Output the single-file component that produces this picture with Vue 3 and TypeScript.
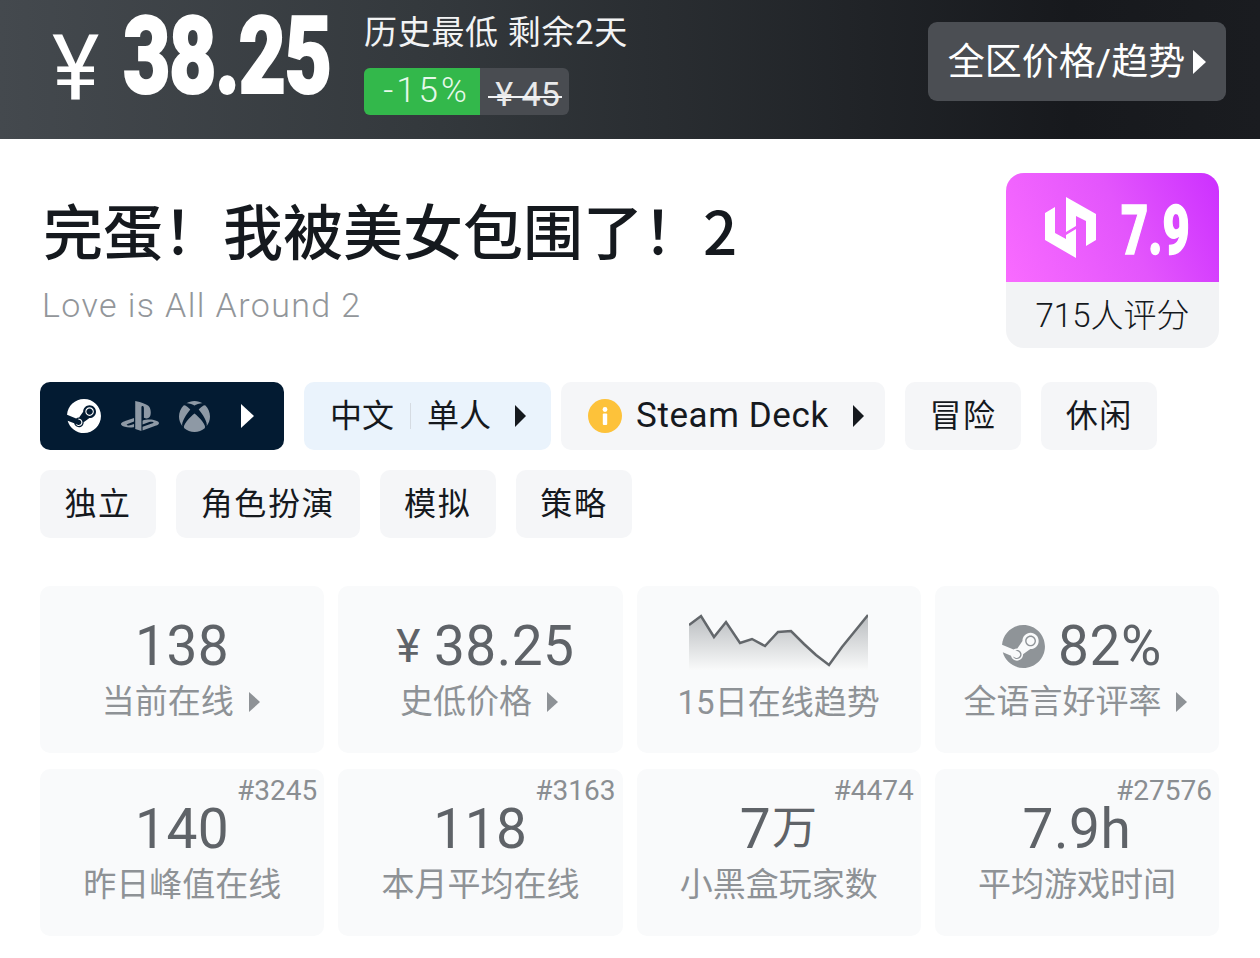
<script setup lang="ts">
interface Stat { value: string; unit?: string; label: string; arrow?: boolean; rank?: string; yen?: boolean; steam?: boolean; chart?: boolean }

const tagsA: string[] = ['冒险', '休闲']
const tagsB: string[] = ['独立', '角色扮演', '模拟', '策略']

const stats: Stat[] = [
  { value: '138', label: '当前在线', arrow: true },
  { value: '38.25', label: '史低价格', arrow: true, yen: true },
  { value: '', label: '15日在线趋势', chart: true },
  { value: '82%', label: '全语言好评率', arrow: true, steam: true },
  { value: '140', label: '昨日峰值在线', rank: '#3245' },
  { value: '118', label: '本月平均在线', rank: '#3163' },
  { value: '7', unit: '万', label: '小黑盒玩家数', rank: '#4474' },
  { value: '7.9h', label: '平均游戏时间', rank: '#27576' },
]

const chartPoints = '0,11 12,2 25,23 37,8 51,29 63,25 76,32 89,18 102,17 115,30 127,41 140,51 153,33 166,17 179,1'
const chartArea = `0,56 ${chartPoints} 179,56`
const gameTitle = '完蛋\uFF01我被美女包围了\uFF012'
const steamPath = 'M11.979 0C5.678 0 .511 4.86.022 11.037l6.432 2.658c.545-.371 1.203-.59 1.912-.59.063 0 .125.004.188.006l2.861-4.142V8.91c0-2.495 2.028-4.524 4.524-4.524 2.494 0 4.524 2.031 4.524 4.527s-2.03 4.525-4.524 4.525h-.105l-4.076 2.911c0 .052.004.105.004.159 0 1.875-1.515 3.396-3.39 3.396-1.635 0-3.016-1.173-3.331-2.727L.436 15.27C1.862 20.307 6.486 24 11.979 24c6.627 0 11.999-5.373 11.999-12S18.605 0 11.979 0zM7.54 18.21l-1.473-.61c.262.543.714.999 1.314 1.25 1.297.539 2.793-.076 3.332-1.375.263-.63.264-1.319.005-1.949s-.75-1.121-1.377-1.383c-.624-.26-1.29-.249-1.878-.03l1.523.63c.956.4 1.409 1.5 1.009 2.455-.397.957-1.497 1.41-2.454 1.012H7.54zm11.415-9.303c0-1.662-1.353-3.015-3.015-3.015-1.665 0-3.015 1.353-3.015 3.015 0 1.665 1.35 3.015 3.015 3.015 1.663 0 3.015-1.35 3.015-3.015zm-5.273-.005c0-1.252 1.013-2.266 2.265-2.266 1.249 0 2.266 1.014 2.266 2.266 0 1.251-1.017 2.265-2.266 2.265-1.253 0-2.265-1.014-2.265-2.265z'
</script>

<template>
  <div class="page">
    <header class="price-bar">
      <div class="price-main">
        <span class="yen">¥</span>
        <span class="big">38.25</span>
      </div>
      <div class="price-info">
        <div class="low-note">历史最低 剩余2天</div>
        <div class="discount">
          <span class="off">-15%</span>
          <span class="orig">¥ 45</span>
        </div>
      </div>
      <button class="region-btn"><span class="region-text">全区价格/趋势</span><i class="tri tri-white tri-big"></i></button>
    </header>

    <section class="title-row">
      <div class="titles">
        <h1>{{ gameTitle }}</h1>
        <p>Love is All Around 2</p>
      </div>
      <div class="score">
        <div class="score-top">
          <svg class="hh-logo" viewBox="0 0 51 61" aria-hidden="true">
            <path d="M21 0 L51 17 V43 L41 49 V24 L31 19 V29 L21 35 Z" fill="#fff" />
            <path d="M0 16 L10 10 V36 L21 42 V38 L31 32 V61 L0 43 Z" fill="#fff" />
          </svg>
          <span class="score-num">7.9</span>
        </div>
        <div class="score-bottom">715人评分</div>
      </div>
    </section>

    <section class="tags">
      <div class="tag-row">
        <div class="tag tag-dark">
          <svg class="pf" viewBox="0 0 24 24"><path :d="steamPath" fill="#fff" /></svg>
          <svg class="pf pf-ps" viewBox="0 0 24 24"><path fill="#8e99a5" d="M8.985 2.596v17.548l3.915 1.261V6.688c0-.69.304-1.151.794-.991.636.181.76.814.76 1.505v5.876c2.441 1.193 4.362-.002 4.362-3.153 0-3.237-1.126-4.675-4.438-5.827-1.307-.448-3.728-1.186-5.391-1.502zm4.656 16.242l6.296-2.275c.715-.258.826-.625.246-.818-.586-.192-1.637-.139-2.357.123l-4.205 1.499v-2.385l.24-.085s1.201-.42 2.913-.615c1.696-.18 3.785.03 5.437.661 1.848.601 2.041 1.472 1.576 2.072s-1.622 1.036-1.622 1.036l-8.544 3.107v-2.297zM1.808 18.6c-1.9-.545-2.214-1.668-1.352-2.321.801-.585 2.159-1.051 2.159-1.051l5.616-2.013v2.313L4.206 17c-.705.271-.825.63-.239.825.586.195 1.637.15 2.343-.12L8.248 17v2.074c-.121.029-.256.044-.391.073-1.938.331-3.995.196-6.049-.547z" /></svg>
          <svg class="pf pf-x" viewBox="0 0 24 24"><path fill="#8e99a5" d="M4.102 21.033C6.211 22.881 8.977 24 12 24c3.026 0 5.789-1.119 7.902-2.967 1.877-1.912-4.316-8.709-7.902-11.417-3.582 2.708-9.779 9.505-7.898 11.417zm11.16-14.406c2.5 2.961 7.484 10.313 6.076 12.912C23.002 17.48 24 14.861 24 12.004c0-3.34-1.365-6.362-3.57-8.536 0 0-.027-.022-.082-.042-.063-.022-.152-.045-.281-.045-.592 0-1.985.434-4.805 3.246zM3.654 3.426c-.057.02-.082.041-.086.042C1.365 5.642 0 8.664 0 12.004c0 2.854.998 5.473 2.661 7.533-1.401-2.605 3.579-9.951 6.08-12.91-2.82-2.813-4.216-3.245-4.806-3.245-.131 0-.223.021-.281.046v-.002zM12 3.551S9.055 1.828 6.755 1.746c-.903-.033-1.454.295-1.521.339C7.379.646 9.659 0 11.984 0H12c2.334 0 4.605.646 6.766 2.085-.068-.046-.615-.372-1.52-.339C14.946 1.828 12 3.545 12 3.545v.006z" /></svg>
          <i class="tri tri-white tri-tag"></i>
        </div>
        <div class="tag tag-blue">
          <span>中文</span><span class="sep"></span><span>单人</span><i class="tri tri-dark tri-tag-s"></i>
        </div>
        <div class="tag tag-deck">
          <svg class="info" viewBox="0 0 34 34">
            <circle cx="17" cy="17" r="17" fill="#fdc23a" />
            <circle cx="17" cy="10.5" r="2.4" fill="#fff" />
            <rect x="14.8" y="14.5" width="4.4" height="11.5" rx="1" fill="#fff" />
          </svg>
          <span class="deck-text">Steam Deck</span><i class="tri tri-dark tri-tag-s"></i>
        </div>
        <div v-for="t in tagsA" :key="t" class="tag tag-plain">{{ t }}</div>
      </div>
      <div class="tag-row">
        <div v-for="t in tagsB" :key="t" class="tag tag-plain">{{ t }}</div>
      </div>
    </section>

    <section class="stats">
      <div v-for="s in stats" :key="s.label" class="stat">
        <span v-if="s.rank" class="rank">{{ s.rank }}</span>
        <svg v-if="s.chart" class="chart" viewBox="0 -2 179 58">
          <defs>
            <linearGradient id="areaFill" x1="0" y1="0" x2="0" y2="1">
              <stop offset="0" stop-color="#b9bcbf" />
              <stop offset="1" stop-color="#f9fafa" />
            </linearGradient>
          </defs>
          <polygon :points="chartArea" fill="url(#areaFill)" />
          <polyline :points="chartPoints" fill="none" stroke="#63676b" stroke-width="2.5" />
        </svg>
        <div v-else class="value" :class="{ 'value-shift': s.yen || s.steam }">
          <svg v-if="s.steam" class="steam-sm" viewBox="0 0 24 24"><path :d="steamPath" fill="#8f9498" /></svg>
          <span v-if="s.yen" class="value-yen">¥</span>{{ s.value }}<span v-if="s.unit" class="value-unit">{{ s.unit }}</span>
        </div>
        <div class="label">{{ s.label }}<i v-if="s.arrow" class="tri tri-grey"></i></div>
      </div>
    </section>
  </div>
</template>

<style scoped>
.page {
  width: 1260px;
  height: 958px;
  background: #fff;
  overflow: hidden;
  font-family: Roboto, "Noto Sans CJK SC", sans-serif;
  color: #15191e;
}
.price-bar {
  height: 139px;
  box-sizing: border-box;
  display: flex;
  align-items: flex-start;
  padding: 0 34px 0 52px;
  background: linear-gradient(90deg, #44494e 0%, #33383c 35%, #17191d 85%, #1a1c20 100%);
  color: #fff;
}
.price-main {
  display: flex;
  align-items: flex-start;
  width: 312px;
  flex: none;
}
.yen {
  font-size: 90px;
  line-height: 90px;
  margin-top: 24px;
  width: 71px;
  font-family: Roboto, sans-serif;
  font-weight: 400;
  flex: none;
}
.big {
  display: block;
  margin-top: 1px;
  font-family: Roboto, sans-serif;
  font-weight: 900;
  font-size: 108px;
  line-height: 110px;
  letter-spacing: -2px;
  -webkit-text-stroke: 2px #fff;
  white-space: nowrap;
  transform: scaleX(0.76);
  transform-origin: left top;
}
.price-info {
  flex: 1;
  padding-top: 12px;
}
.low-note {
  font-size: 33px;
  line-height: 42px;
  letter-spacing: 0.7px;
  color: #f2f3f4;
  font-weight: 400;
  white-space: nowrap;
}
.discount {
  display: inline-flex;
  margin-top: 14px;
  height: 47px;
  border-radius: 6px;
  overflow: hidden;
  background: #494c51;
}
.off {
  width: 116px;
  background: #33b84b;
  color: #e6f9ea;
  font-size: 35px;
  font-weight: 300;
  line-height: 46px;
  letter-spacing: 3px;
  text-align: center;
  padding-left: 9px;
  box-sizing: border-box;
}
.orig {
  position: relative;
  width: 89px;
  padding-left: 6px;
  box-sizing: border-box;
  font-size: 34px;
  line-height: 52px;
  text-align: center;
  color: #e8e9ea;
  font-weight: 400;
}
.orig::after {
  content: "";
  position: absolute;
  left: 8px;
  top: 28px;
  width: 74px;
  height: 2px;
  background: #f2f3f4;
}
.region-btn {
  margin-top: 22px;
  width: 298px;
  height: 79px;
  flex: none;
  border: 0;
  border-radius: 9px;
  background: #4b4e53;
  color: #fff;
  font-family: inherit;
  font-size: 37px;
  line-height: 44px;
  display: flex;
  align-items: center;
  justify-content: center;
  font-weight: 400;
  gap: 8px;
  padding: 0;
}
.region-text { padding-top: 2px; }
.tri {
  display: inline-block;
  width: 0;
  height: 0;
  border-style: solid;
  border-color: transparent;
  flex: none;
}
.tri-white { border-left-color: #fff; }
.tri-dark { border-left-color: #15191e; }
.tri-grey {
  border-left-color: #8e9296;
  border-width: 10px 0 10px 11px;
  margin-left: 15px;
  margin-right: 3px;
}
.tri-big { border-width: 12px 0 12px 13px; }
.tri-tag { border-width: 12px 0 12px 13px; margin-left: 11px; }
.tri-tag-s { border-width: 11px 0 11px 11px; margin-left: 24px; }

.title-row {
  display: flex;
  justify-content: space-between;
  padding: 34px 41px 0 42px;
  height: 243px;
  box-sizing: border-box;
}
.titles h1 {
  margin: 20px 0 0 1px;
  font-family: "Noto Sans CJK SC", sans-serif;
  font-size: 60px;
  line-height: 72px;
  font-weight: 500;
  white-space: nowrap;
}
.titles p {
  margin: 18px 0 0;
  font-size: 34px;
  line-height: 44px;
  font-weight: 300;
  color: #92969a;
  letter-spacing: 1.4px;
}
.score {
  width: 213px;
  height: 175px;
  border-radius: 18px;
  overflow: hidden;
  background: #f2f3f5;
}
.score-top {
  height: 109px;
  background: linear-gradient(65deg, #f96bff 0%, #e355fc 55%, #cc30ff 100%);
  display: flex;
  align-items: center;
  color: #fff;
  padding-left: 39px;
  box-sizing: border-box;
}
.hh-logo { width: 51px; height: 61px; flex: none; }
.score-num {
  display: block;
  margin: 6px 0 0 25px;
  font-family: Roboto, sans-serif;
  font-weight: 900;
  font-size: 69px;
  line-height: 72px;
  -webkit-text-stroke: 1.5px #fff;
  transform: scaleX(0.68);
  transform-origin: left center;
}
.score-bottom {
  text-align: center;
  font-size: 33px;
  line-height: 68px;
  font-weight: 300;
}

.tags {
  display: flex;
  flex-direction: column;
  gap: 20px;
  padding: 0 40px;
}
.tag-row {
  display: flex;
  gap: 20px;
}
.tag {
  height: 68px;
  box-sizing: border-box;
  border-radius: 10px;
  display: flex;
  align-items: center;
  font-size: 32px;
  line-height: 44px;
  letter-spacing: 1.6px;
  font-weight: 400;
}
.tag-plain {
  background: #f5f6f8;
  padding: 0 24.5px;
}
.tag-dark {
  width: 244px;
  background: #031b32;
  padding-left: 27px;
  gap: 20px;
}
.pf { width: 34px; height: 34px; flex: none; }
.pf-ps { width: 38px; height: 38px; }
.pf-x { width: 31px; height: 31px; }
.tag-blue {
  width: 247px;
  background: #eaf3fc;
  padding-left: 26px;
  margin-right: -10px;
  letter-spacing: 0;
}
.sep {
  width: 1px;
  height: 26px;
  background: #d5dbe2;
  margin: 0 16px;
}
.tag-deck {
  width: 324px;
  background: #f5f6f8;
  padding-left: 27px;
}
.info { width: 34px; height: 34px; flex: none; }
.deck-text { margin-left: 14px; font-size: 35px; letter-spacing: 0.6px; }

.stats {
  display: grid;
  grid-template-columns: repeat(4, 1fr);
  column-gap: 14px;
  row-gap: 16px;
  padding: 48px 41px 0 40px;
}
.stat {
  position: relative;
  height: 167px;
  border-radius: 10px;
  background: #f9fafb;
  display: flex;
  flex-direction: column;
  align-items: center;
}
.rank {
  position: absolute;
  top: 6px;
  right: 7px;
  font-size: 28px;
  line-height: 32px;
  font-weight: 400;
  color: #8a8e92;
}
.value {
  margin-top: 27px;
  height: 66px;
  display: flex;
  align-items: center;
  font-size: 55px;
  line-height: 66px;
  letter-spacing: 0.5px;
  color: #5f6368;
  font-weight: 400;
}
.value-shift { padding-left: 10px; }
.value-yen {
  font-size: 46px;
  margin-right: 13px;
}
.value-unit {
  font-size: 45px;
  margin-left: 1px;
}
.steam-sm { width: 43px; height: 43px; margin-right: 13px; }
.chart {
  width: 179px;
  height: 58px;
  margin-top: 26px;
  margin-bottom: 10px;
  flex: none;
}
.label {
  margin-top: 1px;
  font-size: 33px;
  line-height: 44px;
  color: #8e9296;
  font-weight: 400;
  display: flex;
  align-items: center;
  white-space: nowrap;
}
</style>
